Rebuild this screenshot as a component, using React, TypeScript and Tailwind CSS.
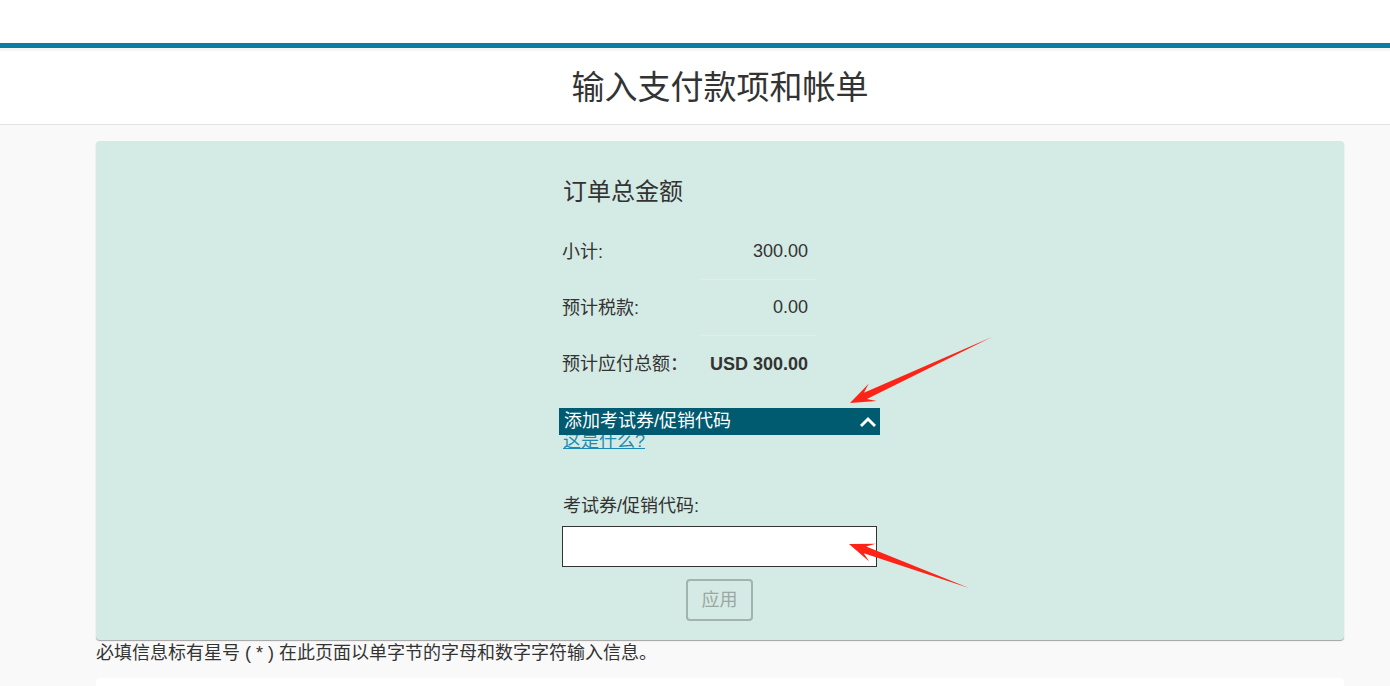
import React from 'react';

const FONT = '"Liberation Sans", "Noto Sans CJK SC", sans-serif';

interface Arrow {
  tail: [number, number];
  tip: [number, number];
}

// red callout arrows drawn over the form
const arrows: Arrow[] = [
  { tail: [992, 337], tip: [850, 403] },
  { tail: [969, 588], tip: [849, 544] },
];

function arrowPoints({ tail, tip }: Arrow) {
  const dx = tip[0] - tail[0];
  const dy = tip[1] - tail[1];
  const len = Math.hypot(dx, dy);
  const ux = dx / len;
  const uy = dy / len;
  const nx = -uy;
  const ny = ux;
  const head = 25;
  const neck = 17;
  const shaft = 3.5;
  const barb = 9.5;
  const at = (d: number, w: number) => [tail[0] + ux * d + nx * w, tail[1] + uy * d + ny * w];
  const pts = [
    tail,
    at(len - neck, shaft),
    at(len - head, barb),
    tip,
    at(len - head, -barb),
    at(len - neck, -shaft),
  ];
  return pts.map((p) => p.join(',')).join(' ');
}

const rows = [
  { label: '小计:', value: '300.00', line: true },
  { label: '预计税款:', value: '0.00', line: true },
  { label: '预计应付总额：', value: 'USD 300.00', line: false, bold: true },
];

export default function App() {
  return (
    <div className="relative min-h-[686px] bg-[#f9f9f9] text-[18px] text-[#333]" style={{ fontFamily: FONT }}>
      {/* top strip */}
      <div className="h-[43px] bg-white" />
      <div className="h-[5px] bg-[#0a7fa2]" />
      <div className="h-[3px] bg-[#f7f7f7]" />
      <div className="flex h-[74px] items-center justify-center border-b border-[#e3e3e3] bg-white pl-[50px]">
        <h1 className="text-[33px] leading-none text-[#333]">输入支付款项和帐单</h1>
      </div>

      <div className="mt-4 mr-[46px] ml-[96px]">
        <div className="rounded bg-[#d4eae4] pt-[36px] pb-[19px] shadow-[0_1px_1px_rgba(0,0,0,0.35)]">
          <div className="ml-[463px] w-[321px]">
            <h2 className="pl-[4px] text-[24px] leading-[30px]">订单总金额</h2>

            <div className="mt-[17px] w-[257px] pl-[3px]">
              {rows.map((r) => (
                <div key={r.label} className="flex h-[56px]">
                  <div className="flex w-[139px] items-center">{r.label}</div>
                  <div
                    className={`flex flex-1 items-center justify-end pr-[8px] ${
                      r.line ? 'border-b border-[#e4ece9]' : ''
                    } ${r.bold ? 'font-bold' : ''}`}
                  >
                    {r.value}
                  </div>
                </div>
              ))}
            </div>

            <div className="relative z-10 mt-[16px] flex h-[27px] items-center justify-between bg-[#005a70] pl-[5px] pr-[4px] text-white">
              <span>添加考试券/促销代码</span>
              <svg width="16" height="12" viewBox="0 0 16 12" fill="none">
                <path d="M2 9 L8 3 L14 9" stroke="white" strokeWidth="3" strokeLinecap="square" />
              </svg>
            </div>
            <a href="#" className="-mt-[4px] block pl-[4px] leading-[20px] text-[#1d8ab2] underline">
              这是什么?
            </a>

            <label className="mt-[44px] block pl-[4px] leading-[22px]">考试券/促销代码:</label>
            <input
              type="text"
              className="mt-[9px] ml-[3px] block h-[41px] w-[315px] border border-[#333] bg-white px-2 outline-none"
            />
            <div className="mt-[12px] flex justify-center">
              <button className="h-[42px] w-[67px] rounded border-2 border-[#a2b2ad] text-[#9aa7a3]">应用</button>
            </div>
          </div>
        </div>

        <p className="mt-[1px] leading-[24px]">必填信息标有星号 ( * ) 在此页面以单字节的字母和数字字符输入信息。</p>
        <div className="mt-[13px] h-[20px] rounded-t bg-white" />
      </div>

      <svg className="pointer-events-none absolute inset-0" width="1390" height="686">
        {arrows.map((a, i) => (
          <polygon key={i} points={arrowPoints(a)} fill="#fd2417" />
        ))}
      </svg>
    </div>
  );
}
